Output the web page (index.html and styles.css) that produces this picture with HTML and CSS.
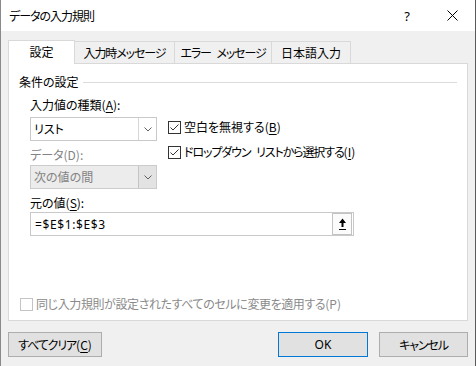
FILE: index.html
```html
<!DOCTYPE html>
<html lang="ja">

<head>
    <meta charset="utf-8">
    <title>データの入力規則</title>
    <link rel="stylesheet" href="styles.css">
</head>

<body>
    <div class="dialog">
        <div class="titlebar">
            <span class="title">データの入力規則</span>
            <span class="help">?</span>
            <span class="close">
                <svg width="11" height="11" viewBox="0 0 11 11">
                    <path d="M0.5 0.5 L10.5 10.5 M10.5 0.5 L0.5 10.5" stroke="#000" stroke-width="1" fill="none" />
                </svg>
            </span>
        </div>

        <div class="content">
            <div class="tabs">
                <div class="tab valgt">設定</div>
                <div class="tab tab-msg"><span class="kana">入力時メッセージ</span></div>
                <div class="tab tab-err"><span class="kana">エラー メッセージ</span></div>
                <div class="tab tab-ime">日本語入力</div>
            </div>

            <div class="panel">
                <div class="group-title">条件の設定</div>

                <div class="fields">
                    <div class="field-row">
                        <div class="left">
                            <div class="label">入力値の種類(<u>A</u>):</div>
                            <div class="select">
                                <span class="value">リスト</span>
                                <span class="arrow">
                                    <svg width="8" height="5" viewBox="0 0 8 5">
                                        <path d="M0.5 0.5 L4 4 L7.5 0.5" stroke="#606060" fill="none" />
                                    </svg>
                                </span>
                            </div>
                            <div class="label disabled gap">データ(D):</div>
                            <div class="select off">
                                <span class="value">次の値の間</span>
                                <span class="arrow">
                                    <svg width="8" height="5" viewBox="0 0 8 5">
                                        <path d="M0.5 0.5 L4 4 L7.5 0.5" stroke="#606060" fill="none" />
                                    </svg>
                                </span>
                            </div>
                        </div>

                        <div class="checks">
                            <div class="check">
                                <span class="box">
                                    <svg width="11" height="11" viewBox="0 0 11 11">
                                        <path d="M1.5 5.5 L4 8 L9.5 2.5" stroke="#333" fill="none" />
                                    </svg>
                                </span>
                                空白を無視する(<u>B</u>)
                            </div>
                            <div class="check">
                                <span class="box">
                                    <svg width="11" height="11" viewBox="0 0 11 11">
                                        <path d="M1.5 5.5 L4 8 L9.5 2.5" stroke="#333" fill="none" />
                                    </svg>
                                </span>
                                <span class="kana">ドロップダウン リストから選択する</span>(<u>I</u>)
                            </div>
                        </div>
                    </div>

                    <div class="label gap">元の値(<u>S</u>):</div>
                    <div class="refedit">
                        <span class="value">=$E$1:$E$3</span>
                        <span class="refbtn">
                            <svg width="9" height="13" viewBox="0 0 9 13">
                                <path d="M4.5 0.5 L8 5 L5.5 5 L5.5 9 L3.5 9 L3.5 5 L1 5 Z" fill="#000" />
                                <path d="M1 11.5 L8 11.5" stroke="#000" />
                            </svg>
                        </span>
                    </div>
                </div>

                <div class="check apply">
                    <span class="box"></span>
                    <span class="apply-text">同じ入力規則が設定されたすべてのセルに変更を適用する</span>(P)
                </div>
            </div>

            <div class="buttons">
                <button class="btn btn-clear"><span class="kana">すべてクリア</span>(<u>C</u>)</button>
                <div class="right-buttons">
                    <button class="btn btn-ok">OK</button>
                    <button class="btn btn-cancel"><span class="kana">キャンセル</span></button>
                </div>
            </div>
        </div>
    </div>
</body>

</html>
```

FILE: styles.css
```css
* {
    padding: 0;
    margin: 0;
    box-sizing: border-box;
}

body {
    font-family: "Noto Sans CJK JP", "Noto Sans", sans-serif;
    font-size: 12px;
    color: #000;
    font-feature-settings: "palt";
}

u {
    text-decoration: underline;
    text-underline-offset: 2px;
}

/* katakana i Yu Gothic UI er smallere */
.kana {
    letter-spacing: -1.1px;
    word-spacing: 4px;
}

.dialog {
    width: 476px;
    height: 366px;
    background-color: #f0f0f0;
    border-left: 1px solid #8a8a8a;
    border-right: 1px solid #5a5a5a;
    display: flex;
    flex-direction: column;
}

.titlebar {
    height: 31px;
    background-color: #fff;
    display: flex;
    align-items: center;
    padding-left: 8px;
}

.title {
    flex: 1;
    line-height: 16px;
    letter-spacing: -1px;
}

.help {
    width: 12px;
    text-align: center;
    margin-right: 34px;
    font-family: "Noto Sans", sans-serif;
    font-size: 13px;
}

.close {
    width: 11px;
    height: 11px;
    margin-right: 17px;
    display: flex;
}

.content {
    flex: 1;
    padding: 9px 7px 0 7px;
    display: flex;
    flex-direction: column;
}

/* faner */
.tabs {
    display: flex;
    align-items: flex-end;
    height: 24px;
    margin-bottom: -1px;
}

.tab {
    height: 23px;
    border: 1px solid #d9d9d9;
    background-color: #f0f0f0;
    margin-left: -1px;
    display: flex;
    align-items: center;
    justify-content: center;
    line-height: 16px;
}

.tab.valgt {
    position: relative;
    z-index: 1;
    height: 24px;
    width: 67px;
    margin-left: 0;
    background-color: #fff;
    border-bottom: none;
    padding-bottom: 1px;
}

.tab-msg {
    width: 101px;
}

.tab-err {
    width: 98px;
}

.tab-ime {
    width: 80px;
}

.panel {
    height: 258px;
    background-color: #fff;
    border: 1px solid #d9d9d9;
    padding: 10px 10px 8px 10px;
    display: flex;
    flex-direction: column;
}

.group-title {
    display: flex;
    align-items: center;
    line-height: 16px;
}

.group-title::after {
    content: "";
    flex: 1;
    height: 1px;
    margin-left: 4px;
    background-color: #dcdcdc;
}

.fields {
    padding-left: 11px;
    margin-top: 7px;
}

.field-row {
    display: flex;
}

.left {
    width: 127px;
}

.label {
    line-height: 16px;
}

.label.gap {
    margin-top: 6px;
}

.disabled {
    color: #838383;
}

.select {
    margin-top: 4px;
    height: 24px;
    display: flex;
    border: 1px solid #c9c9c9;
    background-color: #fff;
}

.select.off {
    margin-top: 2px;
    background-color: #ececec;
    border-color: #cccccc;
    color: #838383;
}

.select .value {
    flex: 1;
    padding-left: 3px;
    line-height: 22px;
}

.select .arrow {
    width: 18px;
    border-left: 1px solid #d6d6d6;
    display: flex;
    align-items: center;
    justify-content: center;
}

.select.off .arrow {
    background-color: #e3e3e3;
    border-left-color: #c4c4c4;
}

.checks {
    margin-left: 11px;
    padding-top: 22px;
    display: flex;
    flex-direction: column;
    gap: 9px;
}

.check {
    display: flex;
    align-items: center;
    line-height: 16px;
    white-space: nowrap;
}

.box {
    width: 13px;
    height: 13px;
    border: 1px solid #333;
    background-color: #fff;
    margin-right: 3px;
    display: flex;
    align-items: center;
    justify-content: center;
}

.refedit {
    margin-top: 1px;
    width: 324px;
    height: 24px;
    border: 1px solid #c9c9c9;
    display: flex;
    align-items: center;
    padding-right: 1px;
}

.refedit .value {
    flex: 1;
    padding-left: 4px;
    font-family: "Noto Sans", sans-serif;
    letter-spacing: 0.6px;
}

.refbtn {
    width: 20px;
    height: 22px;
    border: 1px solid #c3c3c3;
    background-color: #fbfbfb;
    display: flex;
    align-items: center;
    justify-content: center;
}

.check.apply {
    margin-top: auto;
    margin-left: 1px;
    color: #8a8a8a;
}

.apply-text {
    letter-spacing: -0.4px;
}

.check.apply .box {
    border-color: #c4c4c4;
}

/* knapper */
.buttons {
    margin-top: 11px;
    display: flex;
    justify-content: space-between;
}

.right-buttons {
    display: flex;
    gap: 11px;
}

.btn {
    height: 25px;
    background-color: #e1e1e1;
    border: 1px solid #adadad;
    font-family: "Noto Sans CJK JP", "Noto Sans", sans-serif;
    font-size: 12px;
    font-feature-settings: "palt";
    color: #000;
}

.btn-clear {
    width: 94px;
}

.btn-ok {
    width: 90px;
    border-color: #0078d7;
    font-family: "Noto Sans", sans-serif;
}

.btn-cancel {
    width: 89px;
}
```
